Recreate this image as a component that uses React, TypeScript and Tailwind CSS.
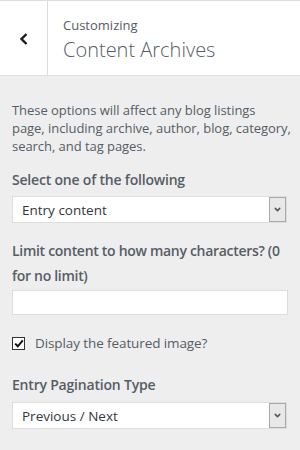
import { ChevronDown } from 'lucide-react'

function SelectBox({ value }: { value: string }) {
  return (
    <div className="flex h-[27px] w-[275px] items-stretch border border-[#dddddd] bg-white">
      <span className="flex flex-1 items-center pl-[9px] pt-[1px] text-[13.5px] text-[#32373c]">{value}</span>
      <span className="flex w-[17px] items-center justify-center border border-[#a9a9a9] bg-[#e8e8e8]">
        <ChevronDown size={9} strokeWidth={4} className="text-[#555]" />
      </span>
    </div>
  )
}

export default function App() {
  return (
    <div
      className="min-h-[450px] w-[300px] bg-[#eeeeee] text-[#555d66]"
      style={{ fontFamily: '"Open Sans", "Noto Sans", sans-serif' }}
    >
      {/* Header */}
      <div className="flex h-[76px] border-y border-[#dddddd] bg-white">
        <button className="flex w-[48px] shrink-0 items-center justify-center border-r border-[#dddddd] pt-[1px]">
          <svg width="10" height="12" viewBox="0 0 10 12">
            <path d="M7.5 1 L2.5 6 L7.5 11" fill="none" stroke="#1a1a1a" strokeWidth="2.4" />
          </svg>
        </button>
        <div className="flex flex-col pl-[15px] pt-[15px]">
          <span className="text-[13px] leading-[18px]">Customizing</span>
          <span className="mt-[3px] text-[20px] font-light leading-[26px]">Content Archives</span>
        </div>
      </div>

      {/* Body */}
      <div className="px-[12px] pt-[25px]">
        <p className="whitespace-nowrap text-[13px] leading-[18px] tracking-[-0.05px]">
          These options will affect any blog listings
          <br />
          page, including archive, author, blog, category,
          <br />
          search, and tag pages.
        </p>

        <div className="mt-[15px] mb-[6px] text-[14px] font-semibold leading-[20px] tracking-[-0.2px]">
          Select one of the following
        </div>
        <SelectBox value="Entry content" />

        <div className="mt-[15px] mb-[2px] text-[14px] font-semibold leading-[25px] tracking-[-0.3px]">
          Limit content to how many characters? (0
          <br />
          for no limit)
        </div>
        <div className="h-[25px] w-[276px] border border-[#dddddd] bg-white" />

        <label className="mt-[19px] flex items-center gap-[10px]">
          <span className="flex h-[13px] w-[13px] items-center justify-center border border-[#333] bg-white">
            <svg width="10" height="9" viewBox="0 0 10 9">
              <path d="M1.2 4.6 L3.8 7.3 L8.8 1.3" fill="none" stroke="#111" strokeWidth="2" />
            </svg>
          </span>
          <span className="text-[13.5px] leading-[18px] tracking-[-0.1px]">Display the featured image?</span>
        </label>

        <div className="mt-[23px] mb-[7px] text-[14px] font-semibold leading-[20px] tracking-[-0.2px]">
          Entry Pagination Type
        </div>
        <SelectBox value="Previous / Next" />
      </div>
    </div>
  )
}
